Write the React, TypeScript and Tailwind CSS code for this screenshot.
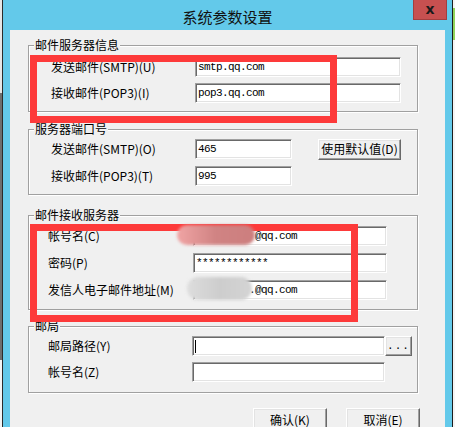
import type { ReactNode } from "react";

const cjk = { fontFamily: '"Noto Sans CJK SC", "Noto Sans", sans-serif' };
const mono = { fontFamily: '"Liberation Mono", "Noto Sans CJK SC", monospace' };

const sunken =
  "bg-white border border-t-[#a0a0a0] border-l-[#a0a0a0] border-r-white border-b-white shadow-[inset_1px_1px_0_#696969,inset_-1px_-1px_0_#e3e3e3]";
const raised =
  "bg-[#f0f0f0] border border-t-white border-l-white border-r-[#696969] border-b-[#696969] shadow-[inset_-1px_-1px_0_#a0a0a0,inset_1px_1px_0_#e3e3e3]";

function Group({
  title,
  className,
  children,
}: {
  title: string;
  className: string;
  children: ReactNode;
}) {
  return (
    <fieldset
      className={`w-[390px] ml-[18px] border border-[#a0a0a0] shadow-[inset_1px_1px_0_#fff,1px_1px_0_#fff] ${className}`}
    >
      <legend className="ml-[5px] px-[1px] text-[12px] leading-[14px] text-black bg-[#f0f0f0]">
        {title}
      </legend>
      {children}
    </fieldset>
  );
}

function Field({
  label,
  labelPad,
  labelWidth,
  inputWidth,
  value,
  textPad = "pl-[2px]",
  caret,
  children,
}: {
  label: string;
  labelPad: string;
  labelWidth: string;
  inputWidth: string;
  value?: string;
  textPad?: string;
  caret?: boolean;
  children?: ReactNode;
}) {
  return (
    <div className="flex items-center h-[20px]">
      <span className={`${labelPad} ${labelWidth} shrink-0 text-[12px] leading-[14px] text-black`}>
        {label}
      </span>
      <div className={`${inputWidth} h-[20px] ${sunken} flex items-center ${textPad}`}>
        {caret && <div className="w-[1px] h-[13px] bg-black" />}
        {value && (
          <span className="text-[11px] tracking-[-0.6px] text-black leading-none" style={mono}>
            {value}
          </span>
        )}
      </div>
      {children}
    </div>
  );
}

export default function App() {
  return (
    <div className="relative w-[455px] h-[427px] overflow-hidden flex bg-[#f0f0f0]" style={cjk}>
      {/* background window strip on the left */}
      <div className="w-[3px] h-full flex flex-col border-r border-[#2b2b2b]">
        <div className="h-[93px] bg-[#e6e6e6]" />
        <div className="h-[267px] bg-[#6e6e6e]" />
        <div className="flex-1 bg-[#f4f4f4]" />
      </div>

      {/* dialog window */}
      <div className="w-[450px] h-full flex flex-col bg-[#63c9ea] border-r border-[#1c1c1c]">
        <div className="relative h-[30px] shrink-0 flex items-center justify-center">
          <span className="text-[15px] leading-none text-[#111] mt-[2px]">系统参数设置</span>
          <div className="absolute top-0 right-[5px] w-[34px] h-[20px] bg-[#c75050] border-x border-b border-[#a33e3e] flex items-center justify-center">
            <span className="text-[14px] font-bold leading-none text-[#1a1a1a] -mt-[2px]" style={{ fontFamily: '"DejaVu Sans", sans-serif' }}>
              x
            </span>
          </div>
        </div>

        <div className="flex-1 ml-[7px] mr-[7px] bg-[#f0f0f0] flex flex-col pt-[8px]">
          <Group title="邮件服务器信息" className="pt-[5px] pb-[8px]">
            <div className="flex flex-col gap-[6px]">
              <Field label="发送邮件(SMTP)(U)" labelPad="pl-[22px]" labelWidth="w-[166px]" inputWidth="w-[206px]" value="smtp.qq.com" />
              <Field label="接收邮件(POP3)(I)" labelPad="pl-[22px]" labelWidth="w-[166px]" inputWidth="w-[206px]" value="pop3.qq.com" />
            </div>
          </Group>

          <Group title="服务器端口号" className="mt-[10px] pt-[3px] pb-[8px]">
            <div className="flex flex-col gap-[7px]">
              <Field label="发送邮件(SMTP)(O)" labelPad="pl-[22px]" labelWidth="w-[166px]" inputWidth="w-[97px]" value="465">
                <button className={`ml-[26px] w-[83px] h-[21px] ${raised} text-[12px] leading-none text-black`}>
                  使用默认值(D)
                </button>
              </Field>
              <Field label="接收邮件(POP3)(T)" labelPad="pl-[22px]" labelWidth="w-[166px]" inputWidth="w-[97px]" value="995" />
            </div>
          </Group>

          <Group title="邮件接收服务器" className="mt-[13px] pt-[4px] pb-[9px]">
            <div className="flex flex-col gap-[7px]">
              <Field label="帐号名(C)" labelPad="pl-[19px]" labelWidth="w-[164px]" inputWidth="w-[194px]" value="@qq.com" textPad="pl-[61px]" />
              <Field label="密码(P)" labelPad="pl-[19px]" labelWidth="w-[164px]" inputWidth="w-[194px]" value="************" />
              <Field label="发信人电子邮件地址(M)" labelPad="pl-[19px]" labelWidth="w-[164px]" inputWidth="w-[194px]" value=".@qq.com" textPad="pl-[55px]" />
            </div>
          </Group>

          <Group title="邮局" className="mt-[9px] pt-[3px] pb-[10px]">
            <div className="flex flex-col gap-[6px]">
              <Field label="邮局路径(Y)" labelPad="pl-[19px]" labelWidth="w-[163px]" inputWidth="w-[193px]" caret>
                <button className={`w-[27px] h-[20px] ${raised} text-[11px] leading-none text-black tracking-[1px]`} style={mono}>
                  ...
                </button>
              </Field>
              <Field label="帐号名(Z)" labelPad="pl-[19px]" labelWidth="w-[163px]" inputWidth="w-[193px]" />
            </div>
          </Group>

          <div className="flex justify-end gap-[19px] mt-[15px] mr-[25px]">
            <button className={`w-[74px] h-[23px] ${raised} text-[12px] leading-none text-black`}>确认(K)</button>
            <button className={`w-[74px] h-[23px] ${raised} text-[12px] leading-none text-black`}>取消(E)</button>
          </div>
        </div>
      </div>

      {/* background window strip on the right */}
      <div className="flex-1 flex flex-col bg-[#f4f4f4]">
        <div className="h-[8px]" />
        <div className="h-[32px] bg-[#8fd35a]" />
      </div>

      {/* annotations drawn over the dialog */}
      <div className="absolute left-[30px] top-[55px] w-[307px] h-[68px] border-[7px] border-[#fd3a3a]" />
      <div className="absolute left-[30px] top-[224px] w-[328px] h-[98px] border-[7px] border-[#fd3a3a]" />

      {/* blurred privacy patches */}
      <div className="absolute left-[177px] top-[225px] w-[78px] h-[20px] rounded-full blur-[1.5px] bg-gradient-to-r from-[#f0a4a4] via-[#d08383] to-[#cc7e7e]" />
      <div className="absolute left-[187px] top-[277px] w-[65px] h-[23px] rounded-full blur-[1.5px] bg-gradient-to-r from-[#dddddd] via-[#cdcdcd] to-[#d4d4d4]" />
    </div>
  );
}
